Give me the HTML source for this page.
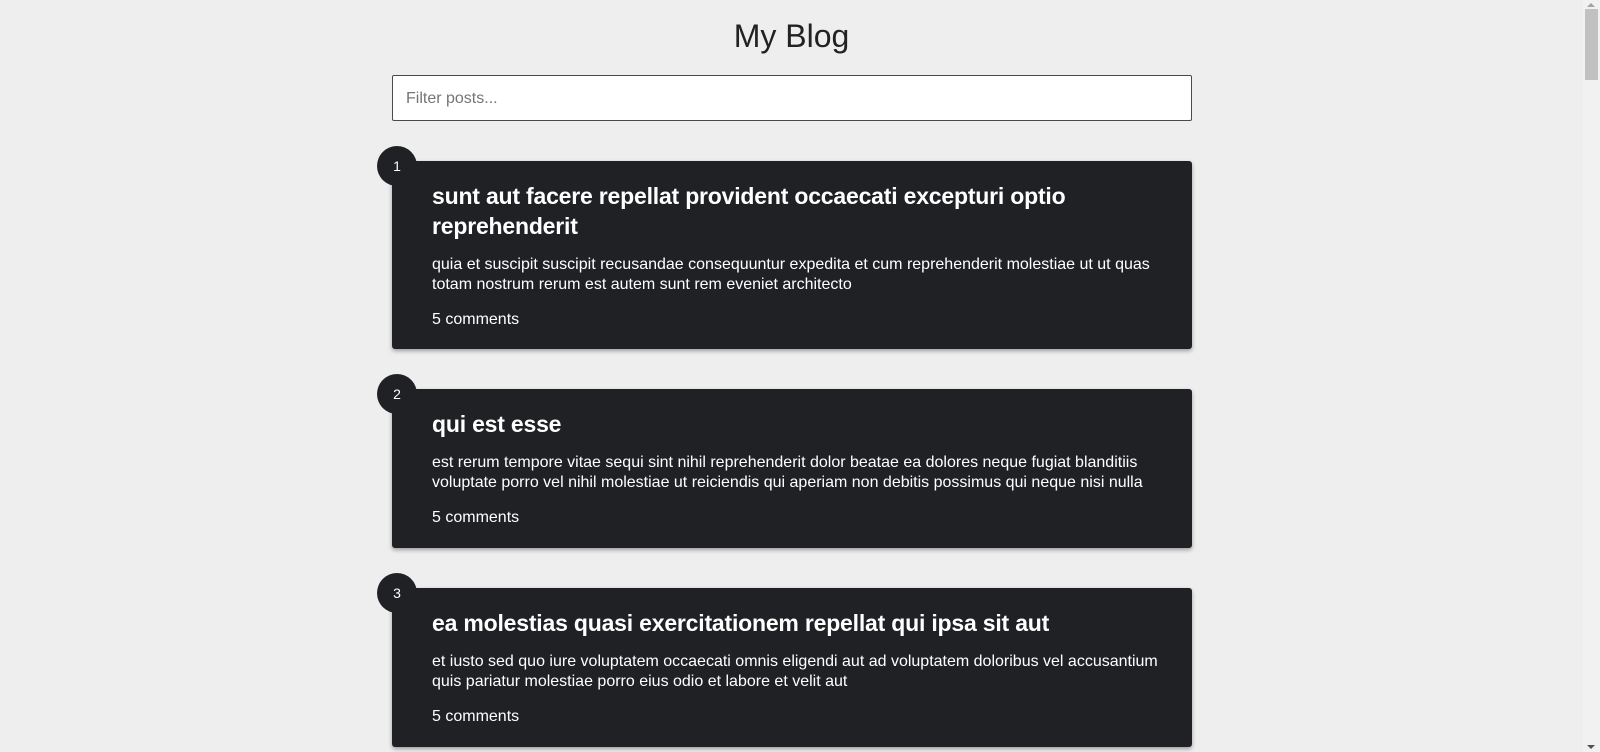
<!DOCTYPE html>
<html><head><meta charset="utf-8"><style>
html,body{margin:0;padding:0;}
body{width:1600px;height:752px;overflow:hidden;background:#eeeeee;font-family:"Liberation Sans",Arial,sans-serif;position:relative;}
h1{position:absolute;left:0;width:1583px;top:16px;margin:0;text-align:center;font-size:32px;font-weight:500;color:#222;line-height:40px;}
.input{position:absolute;left:392px;top:75px;width:798px;height:44px;border:1px solid #4a4a4a;border-radius:2px;background:#fff;box-sizing:content-box;}
.input span{position:absolute;left:13px;top:14px;font-size:16px;color:#757575;}
.card{position:absolute;left:392px;width:800px;background:#1f2124;border-radius:3px;box-shadow:0 2px 4px rgba(0,0,0,.35);color:#fff;box-sizing:border-box;padding:20px 20px 0 40px;}
.badge{position:absolute;left:-15px;top:-15px;width:40px;height:40px;border-radius:50%;background:#1f2124;color:#fff;font-size:14px;line-height:40px;text-align:center;}
.t{font-size:23px;font-weight:bold;line-height:30px;margin:0;letter-spacing:-0.2px;}
.b{font-size:16px;line-height:20px;margin-top:14px;}
.c{font-size:16px;line-height:20px;margin-top:15px;}
.sb{position:absolute;right:0;top:0;width:17px;height:752px;background:#f1f1f1;}
.thumb{position:absolute;left:2px;top:9px;width:13px;height:71px;background:#c1c1c1;}
.up{position:absolute;left:4px;top:3px;width:0;height:0;border-left:4px solid transparent;border-right:4px solid transparent;border-bottom:4px solid #a3a3a3;}
.dn{position:absolute;left:4px;bottom:3px;width:0;height:0;border-left:4px solid transparent;border-right:4px solid transparent;border-top:4px solid #505050;}
</style></head><body>
<h1>My Blog</h1>
<div class="input"><span>Filter posts...</span></div>

<div class="card" style="top:161px;height:188px;">
<div class="badge">1</div>
<p class="t">sunt aut facere repellat provident occaecati excepturi optio<br>reprehenderit</p>
<div class="b">quia et suscipit suscipit recusandae consequuntur expedita et cum reprehenderit molestiae ut ut quas<br>totam nostrum rerum est autem sunt rem eveniet architecto</div>
<div class="c">5 comments</div>
</div>

<div class="card" style="top:389px;height:159px;">
<div class="badge">2</div>
<p class="t">qui est esse</p>
<div class="b">est rerum tempore vitae sequi sint nihil reprehenderit dolor beatae ea dolores neque fugiat blanditiis<br>voluptate porro vel nihil molestiae ut reiciendis qui aperiam non debitis possimus qui neque nisi nulla</div>
<div class="c">5 comments</div>
</div>

<div class="card" style="top:588px;height:159px;">
<div class="badge">3</div>
<p class="t">ea molestias quasi exercitationem repellat qui ipsa sit aut</p>
<div class="b">et iusto sed quo iure voluptatem occaecati omnis eligendi aut ad voluptatem doloribus vel accusantium<br>quis pariatur molestiae porro eius odio et labore et velit aut</div>
<div class="c">5 comments</div>
</div>

<div class="sb"><div class="up"></div><div class="thumb"></div><div class="dn"></div></div>
</body></html>
